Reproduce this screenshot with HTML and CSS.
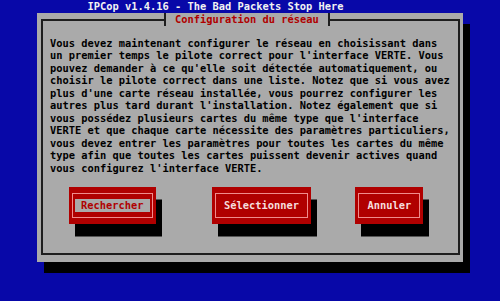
FILE: index.html
```html
<!DOCTYPE html>
<html lang="fr">
<head>
  <meta charset="UTF-8" />
  <meta name="viewport" content="width=device-width, initial-scale=1.0" />
  <title>IPCop - Configuration du réseau</title>
  <link rel="stylesheet" href="styles.css">
</head>
<body>
  <div class="topbar">IPCop v1.4.16 - The Bad Packets Stop Here</div>

  <div class="dialog">
    <div class="frame">
      <span class="title">Configuration du réseau</span>
      <p class="message">Vous devez maintenant configurer le réseau en choisissant dans
un premier temps le pilote correct pour l'interface VERTE. Vous
pouvez demander à ce qu'elle soit détectée automatiquement, ou
choisir le pilote correct dans une liste. Notez que si vous avez
plus d'une carte réseau installée, vous pourrez configurer les
autres plus tard durant l'installation. Notez également que si
vous possédez plusieurs cartes du même type que l'interface
VERTE et que chaque carte nécessite des paramètres particuliers,
vous devez entrer les paramètres pour toutes les cartes du même
type afin que toutes les cartes puissent devenir actives quand
vous configurez l'interface VERTE.</p>
      <div class="buttons">
        <div class="btn btn-search">
          <div class="btn-box"><span class="btn-label focused">Rechercher</span></div>
        </div>
        <div class="btn btn-select">
          <div class="btn-box"><span class="btn-label">Sélectionner</span></div>
        </div>
        <div class="btn btn-cancel">
          <div class="btn-box"><span class="btn-label">Annuler</span></div>
        </div>
      </div>
    </div>
  </div>
</body>
</html>
```

FILE: styles.css
```css
body {
  margin: 0;
  width: 500px;
  height: 301px;
  overflow: hidden;
  background-color: #0808a8;
  font-family: "DejaVu Sans Mono", "Liberation Mono", monospace;
  font-weight: bold;
  font-size: 10.38px;
  line-height: 12.5px;
}

.topbar {
  height: 12.5px;
  padding-left: 87.5px;
  color: #f2f2f2;
  white-space: pre;
}

.dialog {
  margin-left: 37px;
  width: 426px;
  height: 249.5px;
  box-sizing: border-box;
  padding: 6px 3px 7px 4px;
  background: #aaaaaa;
  box-shadow: 7px 11px 0 #000;
}

.frame {
  position: relative;
  height: 100%;
  box-sizing: border-box;
  border: 2px solid #1e1e1e;
  padding: 16.25px 0 0 7px;
}

.title {
  position: absolute;
  top: -7.25px;
  left: 121px;
  height: 12.5px;
  padding: 0 9px;
  background: #aaaaaa;
  border-left: 2px solid #1e1e1e;
  border-right: 2px solid #1e1e1e;
  color: #b00000;
  white-space: pre;
}

.message {
  margin: 0;
  color: #000;
  white-space: pre;
}

.buttons {
  display: flex;
  margin-top: 12.75px;
  padding-left: 18.75px;
}

.btn {
  padding: 6px 3px;
  background: #b00000;
  box-shadow: 6px 12.5px 0 #000;
}

.btn-select { margin-left: 56px; }
.btn-cancel { margin-left: 44px; }

.btn-box {
  border: 1px solid #f08c8c;
  padding: 5.25px 2px;
}

.btn-label {
  display: block;
  padding: 0 6.25px;
  color: #f6dede;
  white-space: pre;
}

.btn-label.focused {
  background: #aaaaaa;
  color: #b00000;
}
```
